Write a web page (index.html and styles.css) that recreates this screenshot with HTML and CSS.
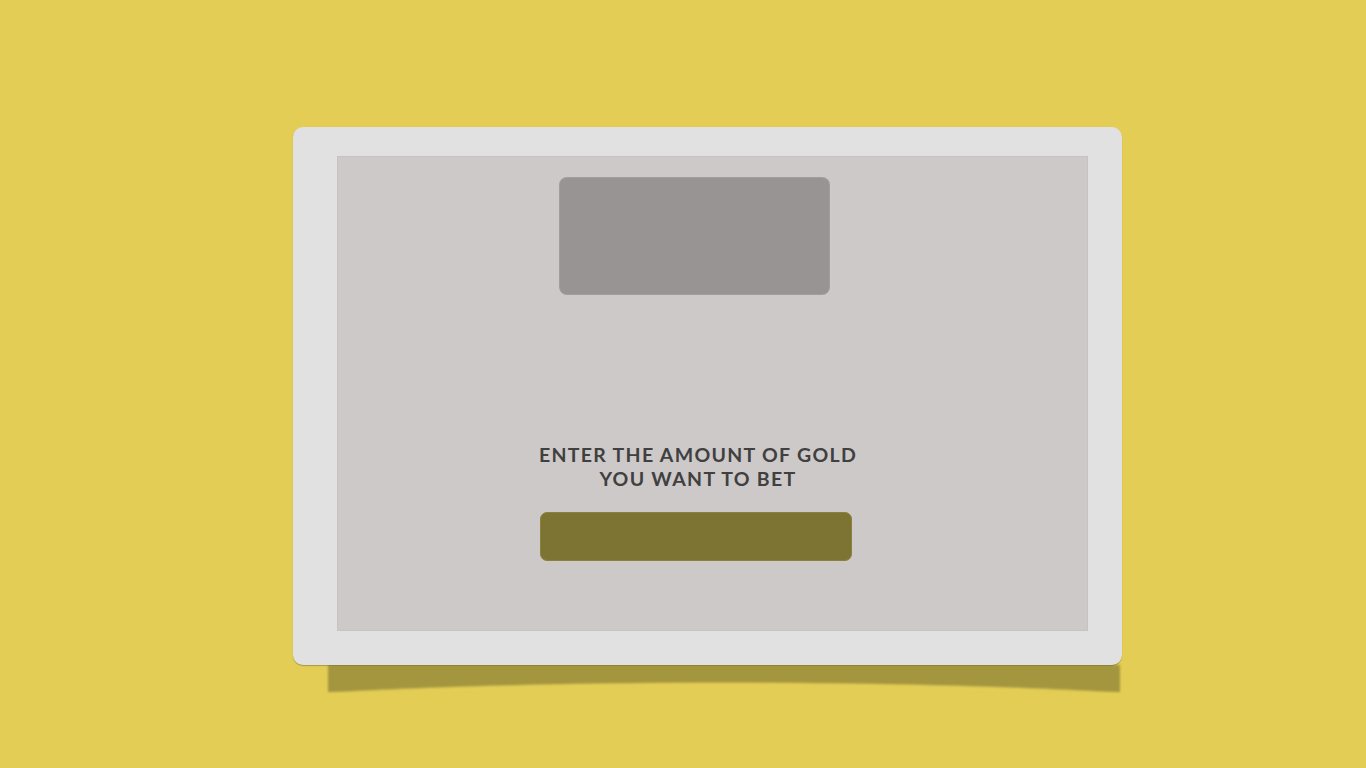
FILE: index.html
```html
<!DOCTYPE html>
<html lang="en">
<head>
    <meta charset="UTF-8">
    <meta name="viewport" content="width=device-width, initial-scale=1.0">
    <title>Place your bet</title>
    <link rel="stylesheet" href="styles.css">
</head>
<body>

    <div class="card">
        <div class="screen">
            <div class="column">
                <!-- coin display -->
                <div class="display"></div>

                <div class="prompt">
                    <div class="prompt-line">Enter the amount of gold</div>
                    <div class="prompt-line">you want to bet</div>
                </div>

                <!-- bet input -->
                <input type="text" class="bet-input" aria-label="Bet amount">
            </div>
        </div>
    </div>

</body>
</html>
```

FILE: styles.css
```css
body {
    margin: 0;
    padding: 127px 0 0 293px;
    background-color: #e3cd55;
    font-family: "Lato", "Open Sans", sans-serif;
    height: 768px;
    box-sizing: border-box;
    overflow: hidden;
}

/* Outer light frame with the curved shadow underneath */
.card {
    position: relative;
    width: 829px;
    height: 538px;
    box-sizing: border-box;
    padding: 29px 34px 34px 44px;
    background-color: #e1e1e1;
    border-radius: 10px;
    box-shadow: 0 1px 1px rgba(0, 0, 0, 0.25);
}

.card::before {
    content: "";
    position: absolute;
    left: 35px;
    right: 2px;
    top: 100%;
    height: 27px;
    background:
        radial-gradient(620px 42px at 50% 59px, #e3cd55 97%, rgba(227, 205, 85, 0) 100%),
        #a4963f;
    filter: blur(1px);
    z-index: -1;
}

/* Inner grey screen */
.screen {
    height: 100%;
    box-sizing: border-box;
    background-color: #cdc9c8;
    border: 1px solid #c6c2c1;
    padding: 21px 0 0 202px;
}

.column {
    width: 312px;
    display: flex;
    flex-direction: column;
}

.display {
    width: 269px;
    height: 116px;
    margin-left: 20px;
    background-color: #989493;
    border-radius: 7px;
    box-shadow: 0 0 0 1px #a19d9c;
}

.prompt {
    align-self: center;
    margin: 149px 0 0 4px;
    text-align: center;
    text-transform: uppercase;
    white-space: nowrap;
    font-weight: 700;
    font-size: 19.5px;
    letter-spacing: 1.3px;
    color: #404040;
}

.prompt-line {
    height: 24px;
    line-height: 24px;
}

.bet-input {
    margin-top: 21px;
    width: 312px;
    height: 49px;
    box-sizing: border-box;
    border: 1px solid #8a8140;
    border-radius: 7px;
    background-color: #7d7434;
    outline: none;
}
```
